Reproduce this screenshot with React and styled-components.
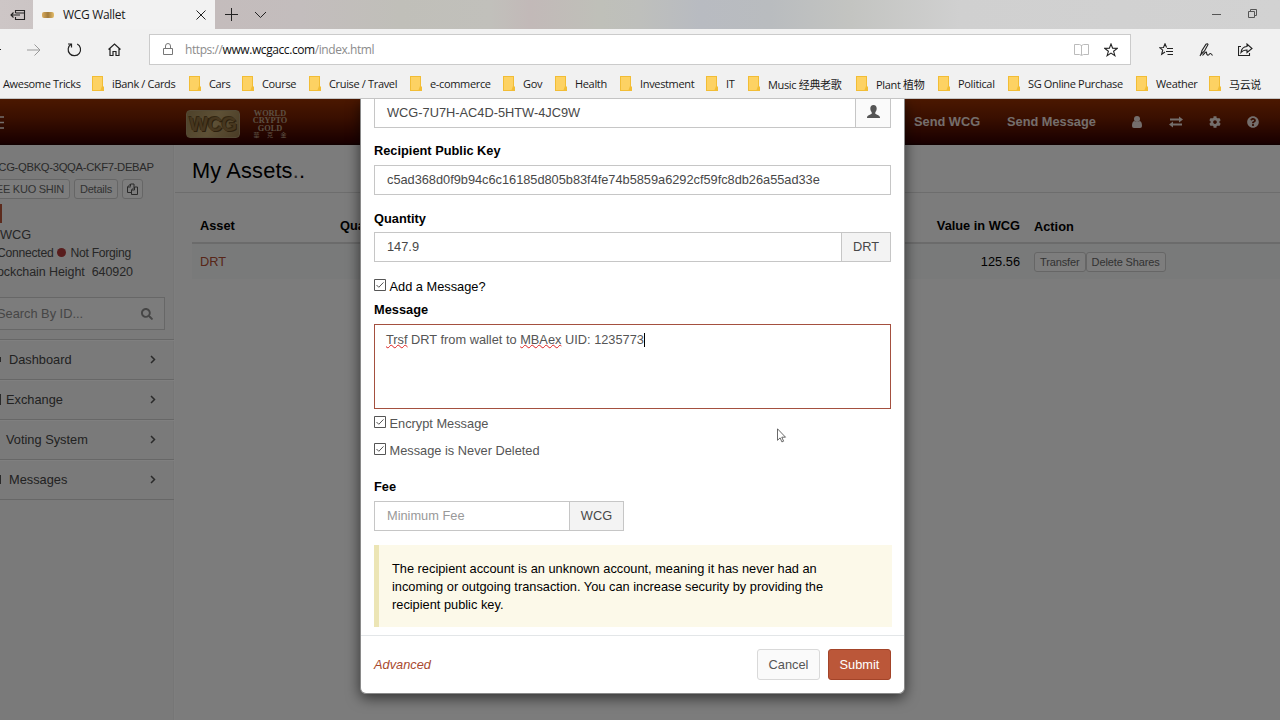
import React from 'react'
import styled, { createGlobalStyle } from 'styled-components'
import { FaCog, FaQuestionCircle, FaSearch } from 'react-icons/fa'

const GlobalStyle = createGlobalStyle`
    *{
        box-sizing: border-box;
    }
    body{
        margin: 0;
        overflow: hidden;
        font-family: "Liberation Sans", Arial, sans-serif;
        font-size: 12.8px;
        color: #000;
    }
    svg{
        display: block;
        flex: none;
    }
`

const Window = styled.div`
    width: 1280px;
    height: 720px;
    display: flex;
    flex-direction: column;
    overflow: hidden;
`
const Row = styled.div`
    display: flex;
    align-items: center;
`

/* browser */
const Chrome = styled.div`
    height: 99px;
    flex: none;
    background: #f1f1f1;
    border-bottom: 1px solid #c4c4c4;
    font-family: "Open Sans", "Noto Sans CJK SC", sans-serif;
    color: #1a1a1a;
`
const TabBar = styled(Row)`
    height: 29px;
    background: linear-gradient(90deg, #cdc6c6 0px, #c4bcbc 215px, #c3bdbd 300px, #c0bfb9 400px, #c1c0bb 490px, #c2b9b8 530px, #bfc0b9 600px, #bebfbc 640px, #b8bbc1 700px, #b9bcbf 770px, #c3c4c1 850px, #d0d0d0 960px, #d2d2d2 1280px);
`
const TabsAside = styled(Row)`
    width: 33px;
    padding-left: 10px;
`
const Tab = styled(Row)`
    width: 182px;
    height: 29px;
    padding: 0 9px;
    background: #f2f2f2;
    font-size: 12px;
`
const Favicon = styled.div`
    width: 12px;
    height: 6px;
    margin-right: 9px;
    border-radius: 2px;
    background: linear-gradient(90deg, #d9ac5e, #a17a3b 50%, #e5bd69);
`
const TabTitle = styled.span`
    flex: 1;
    letter-spacing: -0.32px;
`
const TabActions = styled(Row)`
    flex: 1;
    gap: 16px;
    padding-left: 10px;
`
const WindowButtons = styled(Row)`
    gap: 27px;
    padding: 0 23px 3px 0;
`
const AddressRow = styled(Row)`
    height: 41px;
`
const NavIcons = styled(Row)`
    width: 149px;
    gap: 26px;
`
const AddressBox = styled(Row)`
    width: 982px;
    height: 31px;
    padding: 0 12px 0 13px;
    border: 1px solid #cbcbcb;
    background: #fff;
`
const AddressIcons = styled(Row)`
    gap: 15px;
`
const Url = styled.span`
    flex: 1;
    margin-left: 11px;
    font-size: 12px;
    letter-spacing: -0.42px;
    color: #8c8c8c;
    b{
        font-weight: 400;
        color: #111;
    }
`
const ToolIcons = styled(Row)`
    gap: 25px;
    padding-left: 28px;
`
const Bookmarks = styled(Row)`
    height: 28px;
    padding: 0 0 1px 3px;
`
const BookmarkItem = styled(Row)`
    width: ${({ $width }) => $width}px;
    flex: none;
    gap: 8px;
    white-space: nowrap;
    font-size: 11px;
    letter-spacing: -0.34px;
`

/* wallet page */
const Page = styled.div`
    position: relative;
    flex: 1;
    display: flex;
    flex-direction: column;
    background: #f8f8f8;
    overflow: hidden;
`
const Header = styled(Row)`
    height: 46px;
    flex: none;
    background: linear-gradient(#963000, #741f00 40%, #340000 95%, #200000);
    color: #f0e6e0;
`
const Brand = styled(Row)`
    flex: 1;
    gap: 12px;
    padding: 4px 0 0 182px;
`
const LogoPlate = styled.div`
    width: 54px;
    height: 28px;
    border-radius: 4px;
    background: linear-gradient(120deg, #9c8455, #bda26c 50%, #95794c);
    border: 1px solid #a8936a;
    color: #8f6f3e;
    font-size: 20px;
    font-weight: 700;
    line-height: 27px;
    letter-spacing: -0.5px;
    text-align: center;
    text-shadow: 1px 1px 0 #5a401b, -1px -1px 0 #694f25;
`
const LogoWords = styled.div`
    width: 36px;
    padding-top: 1px;
    font-family: "Liberation Serif", "Noto Sans CJK TC", serif;
    font-size: 8.3px;
    font-weight: 700;
    line-height: 7.4px;
    text-align: center;
    white-space: nowrap;
    color: #b89f86;
    small{
        display: block;
        font-size: 6px;
        word-spacing: 6px;
        font-weight: 400;
    }
`
const HeaderLink = styled.span`
    width: ${({ $width }) => $width}px;
    padding-bottom: 1px;
    font-weight: 700;
    font-size: 12.8px;
    color: #e8ddd8;
`
const HeaderIcons = styled(Row)`
    width: 149px;
    gap: 26px;
    color: #e8ddd8;
`
const Main = styled.div`
    flex: 1;
    display: flex;
`
const Sidebar = styled.div`
    width: 175px;
    flex: none;
    background: #f4f4f4;
    border-right: 1px solid #fdfdfd;
    box-shadow: inset -1px 0 0 #ececec;
    color: #555;
`
const Account = styled.div`
    height: 195px;
    padding-top: 14px;
    border-bottom: 1px solid #cfcfcf;
    white-space: nowrap;
`
const AccountId = styled.div`
    height: 20px;
    margin-left: -12px;
    font-size: 11.3px;
    letter-spacing: -0.34px;
    line-height: 16px;
`
const AccountButtons = styled(Row)`
    gap: 4px;
    margin-left: -16px;
    margin-bottom: 5px;
`
const SmallButton = styled.span`
    height: 20px;
    padding: 0 5px;
    border: 1px solid #cdcdcd;
    border-radius: 3px;
    background: #fafafa;
    font-size: 11px;
    letter-spacing: ${({ $tight }) => ($tight ? -0.25 : -0.12)}px;
    line-height: 18px;
    color: #666;
    white-space: nowrap;
`
const CopyButton = styled(SmallButton)`
    padding: 0 4px;
`
const Balance = styled.div`
    width: 2px;
    height: 19px;
    background: #b8563a;
`
const Status = styled(Row)`
    height: ${({ $height }) => $height}px;
    margin-left: ${({ $left }) => $left}px;
    font-size: ${({ $size }) => $size || 12.2}px;
    letter-spacing: ${({ $size }) => ($size ? -0.08 : -0.28)}px;
    gap: ${({ $gap }) => $gap || 5}px;
    color: #4e4e4e;
`
const Dot = styled.i`
    width: 9px;
    height: 9px;
    margin: 0 -1px;
    border-radius: 50%;
    background: #b03a3a;
`
const SearchBox = styled(Row)`
    width: 165px;
    height: 33px;
    margin-top: 14px;
    padding-right: 11px;
    border: 1px solid #cfcfcf;
    border-left: 0;
    background: #f8f8f8;
    color: #8c8c8c;
    justify-content: space-between;
    span{
        margin-left: -3px;
    }
`
const MenuItem = styled(Row)`
    height: 40px;
    padding: 0 18px 1px 0;
    border-top: 1px solid #fff;
    border-bottom: 1px solid #cfcfcf;
    color: #444;
    justify-content: space-between;
`
const MenuIcon = styled.i`
    width: 1px;
    height: ${({ $height }) => $height}px;
    margin-right: ${({ $gap }) => $gap}px;
    background: #555;
`
const Content = styled.div`
    flex: 1;
`
const PageTitle = styled.h1`
    height: 48px;
    margin: 0;
    padding-left: 17px;
    border-bottom: 1px solid #dadada;
    font-size: 21.8px;
    font-weight: 400;
    letter-spacing: 0.15px;
    line-height: 52px;
    span{
        color: #555;
    }
`
const TableRow = styled.div`
    display: grid;
    grid-template-columns: 140px 544px 136px 1fr;
    align-items: center;
    height: ${({ $head }) => ($head ? 51 : 35)}px;
    margin-left: 17px;
    padding: ${({ $head }) => ($head ? '16px' : '0')} 0 ${({ $head }) => ($head ? '0' : '1px')} 8px;
    font-weight: ${({ $head }) => ($head ? 700 : 400)};
    border-bottom: ${({ $head }) => ($head ? '2px solid #d6d6d6' : '0')};
    background: ${({ $head }) => ($head ? 'transparent' : '#f2f5f4')};
`
const Cell = styled.div`
    text-align: ${({ $right }) => ($right ? 'right' : 'left')};
    color: ${({ $link }) => ($link ? '#b04c32' : 'inherit')};
`
const Actions = styled(Row)`
    gap: 0;
    padding: 1px 0 0 14px;
`
const Backdrop = styled.div`
    position: absolute;
    inset: 0;
    background: rgba(0, 0, 0, 0.5);
`

/* transfer dialog */
const Modal = styled.div`
    position: absolute;
    left: 360px;
    top: 0;
    width: 545px;
    height: 595px;
    border: 1px solid #8a8a8a;
    border-top: 0;
    border-radius: 0 0 6px 6px;
    background: #fff;
    box-shadow: 0 4px 14px rgba(0, 0, 0, 0.6);
`
const ModalBody = styled.div`
    height: 537px;
    padding: 0 13px;
    border-bottom: 1px solid #e3e6e8;
`
const Label = styled.div`
    height: ${({ $height }) => $height || 37}px;
    padding-bottom: ${({ $bottom }) => $bottom || 6}px;
    display: flex;
    align-items: flex-end;
    line-height: 16px;
    font-weight: 700;
`
const InputGroup = styled.div`
    display: flex;
    width: ${({ $width }) => ($width ? $width + 'px' : '100%')};
    height: ${({ $cut }) => ($cut ? 29 : 30)}px;
    border: 1px solid #c6c6c6;
    ${({ $cut }) => $cut && 'border-top: 0;'}
`
const Input = styled.div`
    flex: 1;
    padding-left: 12px;
    line-height: ${({ $cut }) => ($cut ? 27 : 28)}px;
    color: ${({ $placeholder }) => ($placeholder ? '#999' : '#484848')};
`
const HexValue = styled.span`
    letter-spacing: -0.02px;
`
const Addon = styled.div`
    width: ${({ $width }) => $width}px;
    display: flex;
    justify-content: center;
    border-left: 1px solid #c6c6c6;
    background: #f3f3f3;
    color: #484848;
    line-height: 28px;
`
const PickButton = styled(Addon)`
    padding-top: 6px;
    background: #fafafa;
`
const Check = styled(Row)`
    height: ${({ $height }) => $height}px;
    gap: 3.5px;
    color: ${({ $dark }) => ($dark ? '#000' : '#555')};
    svg{
        margin-bottom: 3px;
    }
`
const TextArea = styled.div`
    height: 85px;
    padding: 7px 11px;
    border: 1px solid #a4503f;
    line-height: 16px;
    color: #555;
    u{
        text-decoration: underline wavy #d22 1px;
        text-underline-offset: 0;
        text-decoration-skip-ink: none;
    }
`
const Caret = styled.i`
    display: inline-block;
    width: 1px;
    height: 14px;
    background: #000;
    vertical-align: -3px;
`
const Callout = styled.div`
    width: 518px;
    height: 82px;
    margin-top: 14px;
    padding: 15px 40px 0 13px;
    border-left: 5px solid #ece5b5;
    background: #fcf9e9;
    line-height: 18.2px;
`
const ModalFooter = styled(Row)`
    height: 57px;
    padding: 0 13px 1px;
    gap: 8px;
    em{
        flex: 1;
        color: #a84a30;
    }
`
const Button = styled.div`
    width: 63px;
    height: 31px;
    border: 1px solid ${({ $primary }) => ($primary ? '#a34429' : '#d9d9d9')};
    border-radius: 3px;
    background: ${({ $primary }) => ($primary ? '#bb5739' : '#fafafa')};
    color: ${({ $primary }) => ($primary ? '#fff' : '#555')};
    line-height: 29px;
    text-align: center;
`
const Pointer = styled.svg`
    position: absolute;
    left: 777px;
    top: 329px;
`

const bookmarks = [
    { name: 'iBank / Cards', width: 97 },
    { name: 'Cars', width: 53 },
    { name: 'Course', width: 67 },
    { name: 'Cruise / Travel', width: 101 },
    { name: 'e-commerce', width: 93 },
    { name: 'Gov', width: 52 },
    { name: 'Health', width: 65 },
    { name: 'Investment', width: 86 },
    { name: 'IT', width: 42 },
    { name: 'Music 经典老歌', width: 108 },
    { name: 'Plant 植物', width: 82 },
    { name: 'Political', width: 70 },
    { name: 'SG Online Purchase', width: 128 },
    { name: 'Weather', width: 73 },
    { name: '马云说', width: 60 },
]

const menus = [
    { name: 'Dashboard', icon: 5, gap: 8 },
    { name: 'Exchange', icon: 11, gap: 5 },
    { name: 'Voting System', icon: 0, gap: 5 },
    { name: 'Messages', icon: 9, gap: 8 },
]

// 1px line icon
function Line({ w, h, d, color = '#222', width = 1 }) {
    return (
        <svg width={w} height={h} viewBox={`0 0 ${w} ${h}`} fill="none" stroke={color} strokeWidth={width}>
            <path d={d} />
        </svg>
    )
}

function Folder() {
    return (
        <svg width="12" height="15" viewBox="0 0 12 15">
            <path d="M0 0h11v10l1 1v4H0z" fill="#f2bd35" />
            <path d="M1 1h9v9l-1.5 4H1z" fill="#fdd263" />
        </svg>
    )
}

function CheckMark() {
    return (
        <svg width="12" height="12" viewBox="0 0 12 12" fill="none" stroke="#555">
            <path d="M.5.5h11v11H.5z" />
            <path d="M2.500 6l2.300 2.300L9.500 3.400" />
        </svg>
    )
}

function Browser() {
    return (
        <Chrome>
            <TabBar>
                <TabsAside>
                    <Line w={16} h={12} d="M5.500 4V1.500h9v9h-9V8M5.500 4h9M1 6h9M3.500 3.500L1 6l2.500 2.500" width={1.1} />
                </TabsAside>
                <Tab>
                    <Favicon />
                    <TabTitle>WCG Wallet</TabTitle>
                    <Line w={10} h={10} d="M.5.5l9 9M9.500.5l-9 9" />
                </Tab>
                <TabActions>
                    <Line w={13} h={13} d="M6.500 0v13M0 6.500h13" />
                    <Line w={13} h={8} d="M1 1l5.500 5.500L12 1" />
                </TabActions>
                <WindowButtons>
                    <Line w={9} h={9} d="M0 5.500h9" color="#555" />
                    <Line w={9} h={9} d="M.5 2.500h6v6h-6zM2.500 2V.5h6v6H7" color="#555" />
                </WindowButtons>
            </TabBar>
            <AddressRow>
                <NavIcons>
                    <Line w={1} h={1} d="M0 .5h1" />
                    <Line w={14} h={12} d="M0 6h13M7.500.5L13 6l-5.500 5.500" color="#999" />
                    <Line w={15} h={15} d="M10.200 2A6.200 6.200 0 1 1 4 2.300M4.500 5.500V2H1" width={1.2} />
                    <Line w={13} h={13} d="M.5 6.500l6-5.500 6 5.500M2 5.500v7h3v-4h3v4h3v-7" width={1.2} />
                </NavIcons>
                <AddressBox>
                    <Line w={11} h={13} d="M.5 5.500h9v6h-9zM2.500 5V3a2.500 2.500 0 0 1 5 0v2" color="#777" />
                    <Url>https://<b>www.wcgacc.com</b>/index.html</Url>
                    <AddressIcons>
                        <Line w={15} h={13} d="M.5 1.500h5l2 1 2-1h5v10h-5l-2 1-2-1h-5zM7.500 2v10" color="#bbb" />
                        <Line w={14} h={14} d="M7 1l1.600 4.300 4.600.1-3.600 2.900 1.300 4.400L7 10.100l-3.900 2.600 1.300-4.400L.8 5.400l4.600-.1z" width={1.1} />
                    </AddressIcons>
                </AddressBox>
                <ToolIcons>
                    <Line w={15} h={13} d="M7.600 4.500L6 .8 4.500 4.500.7 4.700l3 2.500-1 4L6 9M8 5.500h6M7 8.500h7M8.500 11.500H14" width={1.1} />
                    <Line w={14} h={14} d="M2 11.500L3 7.500 7 1.200q1.500-1 2 .3L5.500 8zM1 13l1-2M3.500 12.500q4-5 4-3t1 2.500 2-1 3 1.500" width={1.1} />
                    <Line w={15} h={13} d="M3 3.500H.5v9h11V10M3 9.500q.5-5.500 6-6V1l5 4.500-5 4V7q-4 0-6 2.500z" width={1.1} />
                </ToolIcons>
            </AddressRow>
            <Bookmarks>
                <BookmarkItem $width={89}>Awesome Tricks</BookmarkItem>
                {bookmarks.map(mark => (
                    <BookmarkItem key={mark.name} $width={mark.width}>
                        <Folder />
                        <span>{mark.name}</span>
                    </BookmarkItem>
                ))}
            </Bookmarks>
        </Chrome>
    )
}

function WalletHeader() {
    return (
        <Header>
            <Line w={4} h={13} d="M0 1h4M0 6.500h4M0 12h4" color="#e8ddd8" width={1.5} />
            <Brand>
                <LogoPlate>WCG</LogoPlate>
                <LogoWords>
                    WORLD<br />CRYPTO<br />GOLD
                    <small>華 克 金</small>
                </LogoWords>
            </Brand>
            <HeaderLink $width={93}>Send WCG</HeaderLink>
            <HeaderLink $width={124}>Send Message</HeaderLink>
            <HeaderIcons>
                <svg width="12" height="12" viewBox="0 0 12 12" fill="currentColor">
                    <circle cx="6" cy="3" r="3" />
                    <path d="M3.300 5q2.700 2.200 5.400 0Q11 5.500 11 10q0 2-2 2H3q-2 0-2-2 0-4.500 2.300-5z" />
                </svg>
                <svg width="14" height="12" viewBox="0 0 14 12" fill="currentColor">
                    <path d="M1 2.500h9V.5l4 3-4 3v-2H1zM13 7.500H4v-2l-4 3 4 3v-2h9z" />
                </svg>
                <FaCog size={12} />
                <FaQuestionCircle size={12} />
            </HeaderIcons>
        </Header>
    )
}

function SideMenu() {
    return (
        <Sidebar>
            <Account>
                <AccountId>WCG-QBKQ-3QQA-CKF7-DEBAP</AccountId>
                <AccountButtons>
                    <SmallButton $tight>LEE KUO SHIN</SmallButton>
                    <SmallButton $tight>Details</SmallButton>
                    <CopyButton>
                        <svg width="11" height="18" viewBox="0 -3 11 18" fill="none" stroke="#555">
                            <path d="M3.500 3.500V1H7v3M4 9.500H.5V4L3.500 1M.5 4h3M7.500 4h3v7.500h-6V7l3-3v3h-3" />
                        </svg>
                    </CopyButton>
                </AccountButtons>
                <Balance />
                <Status $height={22} $left={0} $size={12.8}>WCG</Status>
                <Status $height={15} $left={-3}>Connected <Dot /> Not Forging</Status>
                <Status $height={23} $left={-14} $size={12.5} $gap={7}>
                    <span>Blockchain Height</span>
                    <span>640920</span>
                </Status>
                <SearchBox>
                    <span>Search By ID...</span>
                    <FaSearch size={12} />
                </SearchBox>
            </Account>
            {menus.map(menu => (
                <MenuItem key={menu.name}>
                    <Row>
                        <MenuIcon $height={menu.icon} $gap={menu.gap} />
                        {menu.name}
                    </Row>
                    <Line w={6} h={9} d="M1 1l3.500 3.500L1 8" color="#555" width={1.5} />
                </MenuItem>
            ))}
        </Sidebar>
    )
}

function Assets() {
    return (
        <Content>
            <PageTitle>My Assets<span>.</span>.</PageTitle>
            <TableRow $head>
                <Cell>Asset</Cell>
                <Cell>Qua</Cell>
                <Cell $right>Value in WCG</Cell>
                <Actions>Action</Actions>
            </TableRow>
            <TableRow>
                <Cell $link>DRT</Cell>
                <Cell />
                <Cell $right>125.56</Cell>
                <Actions>
                    <SmallButton>Transfer</SmallButton>
                    <SmallButton>Delete Shares</SmallButton>
                </Actions>
            </TableRow>
        </Content>
    )
}

function TransferModal() {
    return (
        <Modal>
            <ModalBody>
                <InputGroup $cut>
                    <Input $cut>WCG-7U7H-AC4D-5HTW-4JC9W</Input>
                    <PickButton $width={35}>
                        <svg width="13" height="13" viewBox="0 0 13 13" fill="#555">
                            <path d="M6.500 0C8.600 0 9.800 1.500 9.700 3.700 9.600 5.600 8.700 6.600 8.300 7.200v1.500c.6.8 4.700 1.500 4.700 3.800V13H0v-.5c0-2.300 4.100-3 4.700-3.800V7.200C4.300 6.600 3.400 5.600 3.300 3.700 3.200 1.500 4.400 0 6.500 0z" />
                        </svg>
                    </PickButton>
                </InputGroup>
                <Label>Recipient Public Key</Label>
                <InputGroup>
                    <Input><HexValue>c5ad368d0f9b94c6c16185d805b83f4fe74b5859a6292cf59fc8db26a55ad33e</HexValue></Input>
                </InputGroup>
                <Label $bottom={5}>Quantity</Label>
                <InputGroup>
                    <Input>147.9</Input>
                    <Addon $width={49}>DRT</Addon>
                </InputGroup>
                <Check $height={49} $dark><CheckMark />Add a Message?</Check>
                <Label $height={13}>Message</Label>
                <TextArea>
                    <u>Trsf</u> DRT from wallet to <u>MBAex</u> UID: 1235773<Caret />
                </TextArea>
                <Check $height={28}><CheckMark />Encrypt Message</Check>
                <Check $height={26}><CheckMark />Message is Never Deleted</Check>
                <Label $height={38}>Fee</Label>
                <InputGroup $width={250}>
                    <Input $placeholder>Minimum Fee</Input>
                    <Addon $width={54}>WCG</Addon>
                </InputGroup>
                <Callout>
                    The recipient account is an unknown account, meaning it has never had an incoming or outgoing transaction. You can increase security by providing the recipient public key.
                </Callout>
            </ModalBody>
            <ModalFooter>
                <em>Advanced</em>
                <Button>Cancel</Button>
                <Button $primary>Submit</Button>
            </ModalFooter>
        </Modal>
    )
}

function App() {
    return (
        <Window>
            <GlobalStyle />
            <Browser />
            <Page>
                <WalletHeader />
                <Main>
                    <SideMenu />
                    <Assets />
                </Main>
                <Backdrop />
                <TransferModal />
                <Pointer width="10" height="15" viewBox="0 0 10 15" fill="#fff" stroke="#444" strokeWidth=".8">
                    <path d="M.5.8v11.500l2.600-2.400 1.800 4 1.700-.7-1.800-4h3.700z" />
                </Pointer>
            </Page>
        </Window>
    )
}

export default App
